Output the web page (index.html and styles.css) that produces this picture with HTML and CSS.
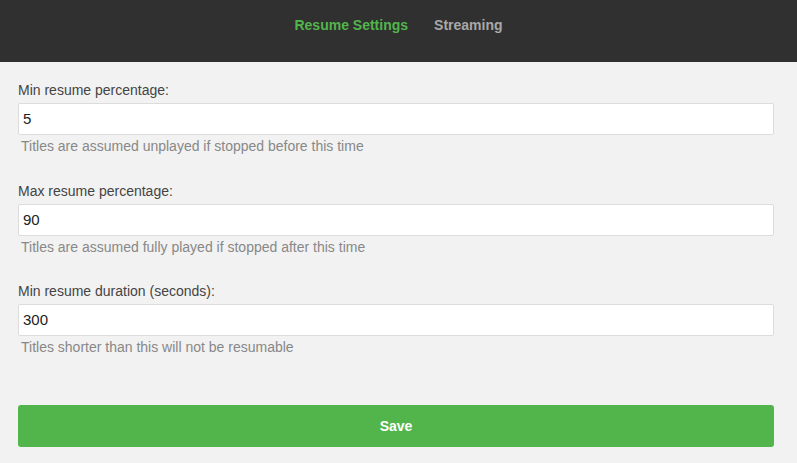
FILE: index.html
```html
<!DOCTYPE html>
<html>
<head>
<meta charset="utf-8">
<link rel="stylesheet" href="styles.css">
</head>
<body>
<header class="topbar">
  <nav class="tabs">
    <a class="tab tab-active">Resume Settings</a>
    <a class="tab">Streaming</a>
  </nav>
</header>
<main class="content">
  <div class="field">
    <label class="label">Min resume percentage:</label>
    <div class="input">5</div>
    <div class="help">Titles are assumed unplayed if stopped before this time</div>
  </div>
  <div class="field">
    <label class="label">Max resume percentage:</label>
    <div class="input">90</div>
    <div class="help">Titles are assumed fully played if stopped after this time</div>
  </div>
  <div class="field">
    <label class="label">Min resume duration (seconds):</label>
    <div class="input">300</div>
    <div class="help">Titles shorter than this will not be resumable</div>
  </div>
  <button class="save">Save</button>
</main>
</body>
</html>
```
FILE: styles.css
```css
* { box-sizing: border-box; }
html, body { margin: 0; padding: 0; }
body {
  background: #f2f2f2;
  font-family: "Liberation Sans", Arial, sans-serif;
  font-size: 14px;
  color: #444;
  width: 797px;
  height: 463px;
  overflow: hidden;
}
.topbar {
  height: 62px;
  background: #303030;
  display: flex;
  justify-content: center;
  padding-top: 16px;
}
.tabs { display: flex; gap: 26px; height: 18px; }
.tab {
  font-weight: bold;
  font-size: 14px;
  line-height: 18px;
  color: #a8a8a8;
}
.tab-active { color: #52b54b; }
.content {
  padding: 19px 23px 0 18px;
  display: flex;
  flex-direction: column;
}
.field {
  display: flex;
  flex-direction: column;
  height: 100.5px;
}
.label {
  display: block;
  line-height: 18px;
  color: #444;
  margin-bottom: 4px;
}
.input {
  height: 32px;
  background: #fff;
  border: 1px solid #dcdcdc;
  border-radius: 2px;
  padding: 0 4px;
  font-size: 15px;
  line-height: 30px;
  color: #222;
}
.help {
  color: #888;
  line-height: 18px;
  margin-top: 2px;
  padding-left: 3px;
}
.save {
  margin-top: 22px;
  height: 42px;
  border: 0;
  border-radius: 3px;
  background: #52b54b;
  color: #fff;
  font-family: "Liberation Sans", Arial, sans-serif;
  font-size: 14px;
  font-weight: bold;
  width: 100%;
}
```
